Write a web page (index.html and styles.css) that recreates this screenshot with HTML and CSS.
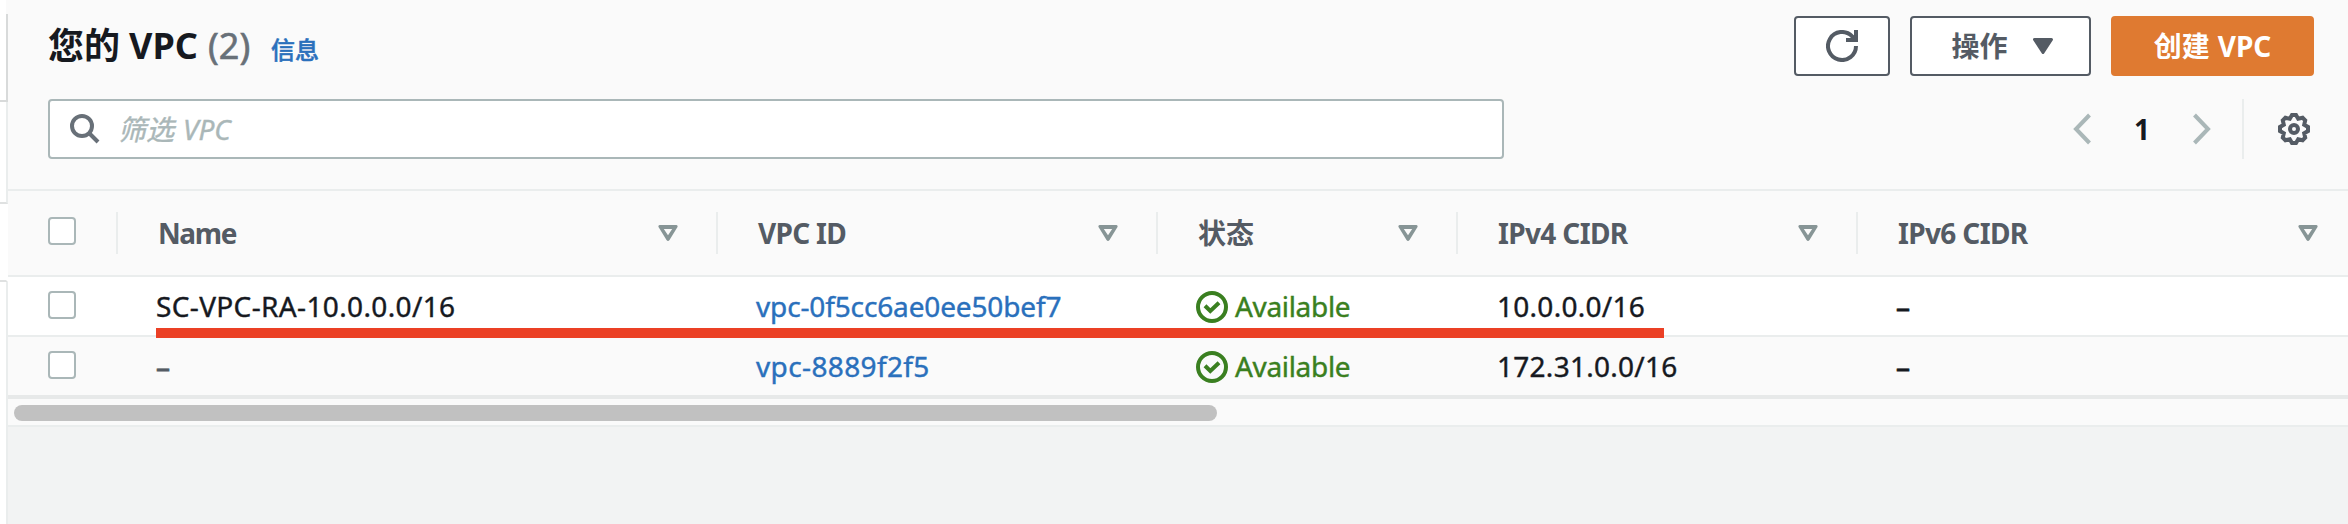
FILE: index.html
```html
<!DOCTYPE html>
<html lang="zh-CN">
<head>
<meta charset="utf-8">
<title>VPC</title>
<link rel="stylesheet" href="styles.css">
</head>
<body>
<svg class="defs" width="0" height="0">
  <symbol id="sort" viewBox="0 0 20 16"><path fill-rule="evenodd" d="M1.500 0H18.500Q20 .3 19.500 2L11.500 15Q10 17 8.500 15L.5 2Q0 .3 1.500 0ZM5.800 4L10 10.300L14.200 4Z" fill="currentColor"/></symbol>
  <symbol id="ok" viewBox="0 0 32 32"><circle cx="16" cy="16" r="14" fill="none" stroke="currentColor" stroke-width="4"/><path d="M9 14.800L14.300 20L23 11.800" fill="none" stroke="currentColor" stroke-width="4"/></symbol>
</svg>
<div class="app">
  <aside class="rail"><div class="r0"></div><div class="r1"></div><div class="r2"></div><div class="r3"></div><div class="r4"></div></aside>
  <main class="panel">
    <header class="top">
      <div class="titlebar">
        <h1><span class="t-cjk">您的</span><span class="t-lat">VPC</span><span class="count">(2)</span></h1>
        <a class="info">信息</a>
        <div class="actions">
          <button class="btn refresh"><svg width="32" height="32" viewBox="0 0 32 32"><path d="M30 16A14 14 0 1 1 26 6.200L29 9" fill="none" stroke="currentColor" stroke-width="4"/><path d="M30 0V10H20" fill="none" stroke="currentColor" stroke-width="4"/></svg></button>
          <button class="btn ops"><span>操作</span><svg width="20" height="16" viewBox="0 0 20 16"><path d="M1.500 1.500H18.500L10 14.500Z" fill="currentColor" stroke="currentColor" stroke-width="3" stroke-linejoin="round"/></svg></button>
          <button class="btn create"><span>创建</span><span class="c-lat">VPC</span></button>
        </div>
      </div>
      <div class="tools">
        <div class="search"><svg width="30" height="30" viewBox="0 0 30 30"><circle cx="12" cy="12" r="10" fill="none" stroke="currentColor" stroke-width="4"/><path d="M19 19L28 28" stroke="currentColor" stroke-width="4"/></svg><span class="ph">筛选</span><span class="ph ph-lat">VPC</span></div>
        <div class="pager">
          <svg width="18" height="32" viewBox="0 0 18 32"><path d="M16.500 2L3 16L16.500 30" fill="none" stroke="currentColor" stroke-width="4"/></svg>
          <b>1</b>
          <svg width="18" height="32" viewBox="0 0 18 32"><path d="M1.500 2L15 16L1.500 30" fill="none" stroke="currentColor" stroke-width="4"/></svg>
        </div>
        <div class="gear"><svg width="32" height="32" viewBox="0 0 32 32" fill="none" stroke="currentColor" stroke-width="4"><path d="M14 2H18L20.200 5.800L24.600 4.800L27.200 7.400L26.200 11.800L30 14V18L26.200 20.200L27.200 24.600L24.600 27.200L20.200 26.200L18 30H14L11.800 26.200L7.400 27.200L4.800 24.600L5.800 20.200L2 18V14L5.800 11.800L4.800 7.400L7.400 4.800L11.800 5.800Z"/><circle cx="16" cy="16" r="4"/></svg></div>
      </div>
    </header>
    <section class="table">
      <div class="row head">
        <div class="check"><i class="box"></i></div>
        <div class="cell"><span class="h-name">Name</span><svg class="sort"><use href="#sort"/></svg></div>
        <div class="cell"><span class="h-id">VPC ID</span><svg class="sort"><use href="#sort"/></svg></div>
        <div class="cell"><span>状态</span><svg class="sort"><use href="#sort"/></svg></div>
        <div class="cell"><span class="h-cidr">IPv4 CIDR</span><svg class="sort"><use href="#sort"/></svg></div>
        <div class="cell"><span class="h-cidr">IPv6 CIDR</span><svg class="sort"><use href="#sort"/></svg></div>
      </div>
      <div class="row first">
        <div class="check"><i class="box"></i></div>
        <div class="cell"><span class="v-name">SC-VPC-RA-10.0.0.0/16</span></div>
        <div class="cell"><a class="id-long">vpc-0f5cc6ae0ee50bef7</a></div>
        <div class="cell ok"><svg><use href="#ok"/></svg><span>Available</span></div>
        <div class="cell"><span class="ip">10.0.0.0/16</span></div>
        <div class="cell"><span class="dash">–</span></div>
        <div class="mark"></div>
      </div>
      <div class="row second">
        <div class="check"><i class="box"></i></div>
        <div class="cell"><span class="dash muted">–</span></div>
        <div class="cell"><a class="id-short">vpc-8889f2f5</a></div>
        <div class="cell ok"><svg><use href="#ok"/></svg><span>Available</span></div>
        <div class="cell"><span class="ip">172.31.0.0/16</span></div>
        <div class="cell"><span class="dash">–</span></div>
      </div>
      <div class="track"><div class="thumb"></div></div>
    </section>
  </main>
</div>
</body>
</html>
```
FILE: styles.css
```css
* { box-sizing: border-box; }
body { margin: 0; background: #fff; color: #16191f; font: 28px/40px "Noto Sans", "Noto Sans CJK SC", sans-serif; }
.defs { position: absolute; }
.app { display: grid; grid-template-columns: 8px 1fr; width: 2348px; height: 524px; overflow: hidden; background: #f2f3f3; }
.rail { display: flex; flex-direction: column; background: #fff; }
.rail div { border-right: 2px solid #eaeded; }
.rail .r0 { height: 14px; border-right-color: #fafafa; }
.rail .r1 { height: 88px; border-bottom: 2px solid #d8dada; border-right-color: #d8dada; }
.r2 { height: 102px; border-bottom: 2px solid #dfe1e1; }
.rail .r3 { height: 78px; border-bottom: 2px solid #dfe1e1; border-right-color: #fff; }
.r4 { flex: 1; }
.top { height: 191px; background: #fafafa; border-bottom: 2px solid #eaeded; padding: 16px 34px 0 40px; }
.titlebar { display: flex; align-items: center; height: 60px; }
h1 { display: flex; margin: 0; font-size: 36px; line-height: 60px; width: 223px; white-space: nowrap; }
.t-cjk { width: 81px; }
.t-lat { width: 79px; }
.count { font-weight: 400; color: #687078; -webkit-text-stroke: .6px; }
.info { font-size: 24px; font-weight: 500; color: #2a70bc; padding-top: 8px; -webkit-text-stroke: .5px; }
.actions { display: flex; gap: 20px; margin-left: auto; }
.btn { display: flex; align-items: center; justify-content: center; height: 60px; padding: 0; border: 2px solid #545b64; border-radius: 4px; background: #fff; color: #545b64; font: bold 28px/40px "Noto Sans", "Noto Sans CJK SC", sans-serif; }
.refresh { width: 96px; }
.ops { width: 181px; gap: 25px; padding-left: 3px; }
.create { width: 203px; gap: 8px; background: #df7a31; border-color: #df7a31; color: #fff; }
.tools { display: flex; margin-top: 23px; height: 60px; align-items: center; }
.search { display: flex; align-items: center; width: 1456px; height: 60px; border: 2px solid #aab7b8; border-radius: 4px; background: #fff; padding-left: 20px; color: #687078; }
.ph { color: #aab7b8; font-style: italic; margin-left: 18px; -webkit-text-stroke: .4px; }
.ph-lat { margin-left: 9px; }
.pager { display: flex; align-items: center; justify-content: space-between; width: 138px; margin-left: auto; color: #aab7b8; }
.pager b { color: #16191f; }
.gear { display: flex; align-items: center; justify-content: flex-end; width: 72px; height: 60px; margin-left: 31px; border-left: 2px solid #eaeded; padding-right: 4px; color: #545b64; }
.row { display: grid; grid-template-columns: 108px 600px 440px 300px 400px 492px; position: relative; height: 60px; background: #fff; border-bottom: 2px solid #eaeded; }
.head { height: 86px; background: #fafafa; color: #545b64; font-weight: bold; align-items: center; }
.check { padding: 14px 0 0 40px; }
.head .check { padding-top: 0; padding-bottom: 4px; }
.box { display: block; width: 28px; height: 28px; border: 2px solid #aab7b8; border-radius: 4px; background: #fff; }
.cell { display: flex; align-items: center; padding-left: 40px; white-space: nowrap; -webkit-text-stroke: .4px; }
.head .cell { height: 42px; border-left: 2px solid #eaeded; padding-right: 38px; justify-content: space-between; -webkit-text-stroke: 0; }
.head .cell:last-child { padding-right: 30px; }
.h-name { letter-spacing: -1.4px; }
.h-id { letter-spacing: -.7px; }
.h-cidr { letter-spacing: -.65px; }
.v-name { letter-spacing: .36px; }
.id-long { letter-spacing: -.14px; }
.id-short { letter-spacing: .37px; }
.ip { letter-spacing: .27px; margin-left: 1px; }
.dash { -webkit-text-stroke: .9px; }
.sort { width: 20px; height: 16px; color: #879596; }
.cell a { color: #2a70bc; }
.ok { gap: 7px; color: #3a7f20; letter-spacing: -.33px; }
.ok svg { width: 32px; height: 32px; margin-top: 2px; }
.second { background: #fafafa; border-bottom: 4px solid #e7e9e9; height: 62px; }
.muted { color: #545b64; }
.mark { position: absolute; left: 148px; top: 51px; width: 1508px; height: 10px; background: #eb4025; z-index: 1; }
.track { height: 28px; background: #fafafa; border-bottom: 2px solid #eaeded; padding: 6px 0 0 6px; }
.thumb { width: 1203px; height: 16px; border-radius: 8px; background: #c1c1c1; }
```
